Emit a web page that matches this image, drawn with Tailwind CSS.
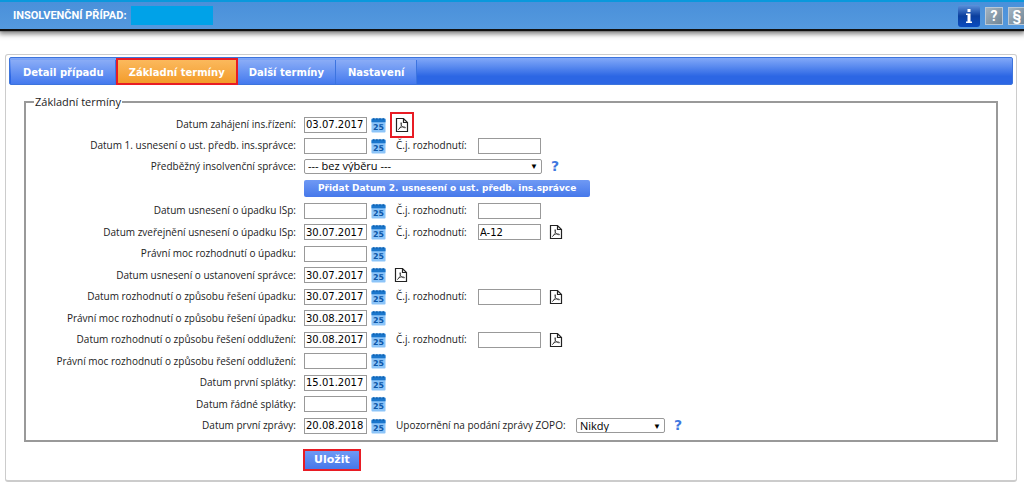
<!DOCTYPE html>
<html lang="cs">
<head>
<meta charset="utf-8">
<title>Insolvenční případ</title>
<script src="https://cdn.jsdelivr.net/npm/@tailwindcss/browser@4"></script>
</head>
<body class="bg-white font-['Open_Sans',sans-serif] text-[10px] text-[#222] overflow-x-hidden">
<svg class="hidden" aria-hidden="true">
  <symbol id="calendar" viewBox="0 0 16 16">
    <rect x="0.5" y="1" width="15" height="15" rx="1" fill="#8cc4f8"/>
    <path d="M0.5 5V2.500Q.5 1 2 1H14Q15.500 1 15.500 2.500V5Z" fill="#1a76cc"/>
    <path d="M3 0.500v2M6.300 0.500v2M9.600 0.500v2M13 0.500v2" stroke="#0b559f" stroke-width="1"/>
    <text x="8" y="13.500" text-anchor="middle" font-family="DejaVu Sans" font-weight="bold" font-size="8.500" fill="#0d57a8">25</text>
  </symbol>
  <symbol id="pdf" viewBox="0 0 14 16">
    <path d="M1.500 1.500H8.500L12.500 5.500V14.500H1.500ZM8.500 1.500V5.500H12.500" fill="#fff" stroke="#222" stroke-width="1.200"/>
    <path d="M3.500 12.500C5.500 11 7 8 6.500 6C6 5 5.500 6 6 7.500C6.700 9.500 8.500 11 10.500 10.800C11 10.200 9 9.600 7 10C5.500 10.300 4 11.200 3.500 12.500Z" fill="none" stroke="#333" stroke-width="0.800"/>
  </symbol>
</svg>

<header class="flex h-[29px] items-center border-t-2 border-[#0a98dc] bg-linear-to-b from-[#4a90da] to-[#5499de] pl-[13px] shadow-[0_2px_1px_#111,0_4px_5px_1px_#00000080]">
  <h1 class="pt-px font-[Roboto,sans-serif] text-[11px] font-bold text-white">INSOLVENČNÍ PŘÍPAD:</h1>
  <span class="ml-[5px] h-[19px] w-[82px] bg-[#00a2e8]"></span>
  <nav class="-mr-[2px] ml-auto flex items-center gap-[5px]">
    <button aria-label="Informace" class="flex size-[22px] items-center justify-center rounded-[3px] bg-linear-to-b from-[#5c92dc] via-[#0a3f9e] to-[#0a4cc0]"><svg viewBox="0 0 22 22" class="size-[22px]" fill="#fff"><path d="M9.500 4h3v3h-3zM8 8.500h4.500v8H14V18H8v-1.500h1.500V10H8z"/></svg></button>
    <button class="h-[18px] w-[18px] border border-[#b9c8d6] bg-linear-to-br from-[#a3b3c0] to-[#6f8596] font-[Roboto,sans-serif] text-[14px] leading-4 font-bold text-white">?</button>
    <button class="h-[18px] w-[18px] border border-[#b9c8d6] bg-linear-to-br from-[#a3b3c0] to-[#6f8596] font-[Roboto,sans-serif] text-[14px] leading-4 font-bold text-white">§</button>
  </nav>
</header>

<main class="mr-[7px] ml-[5px] mt-[25px] rounded-[3px] border border-b-2 border-[#ccc] px-[3px] pt-[2px] pb-[9px]">
  <nav class="flex h-[28px] rounded-[2px] border border-[#3d74dc] bg-linear-to-b from-[#82a8f8] to-[#2c66e4] to-70% pl-px font-['DejaVu_Sans',sans-serif] text-[10px] font-bold text-white">
    <a href="#" class="mt-[2px] flex items-center border-r border-[#3c74e0] bg-linear-to-b from-[#8aacf6] to-[#4479ee] pr-[11px] pl-[12px]">Detail případu</a>
    <a href="#" class="-mb-px flex items-center border-2 border-[#e81c24] bg-linear-to-b from-[#fbb95c] to-[#f39c28] px-[11px] pt-px">Základní termíny</a>
    <a href="#" class="mt-[2px] flex items-center border-r border-[#3c74e0] bg-linear-to-b from-[#8aacf6] to-[#4479ee] px-[11px]">Další termíny</a>
    <a href="#" class="mt-[2px] flex items-center border-r border-[#3c74e0] bg-linear-to-b from-[#8aacf6] to-[#4479ee] px-[12px]">Nastavení</a>
  </nav>
  <form>
    <fieldset class="mx-[15px] mt-[11px] border-2 border-[#999] px-2 pb-1">
      <legend class="px-px text-[11px] leading-3">Základní termíny</legend>
      <div id="rows" class="pt-[6px]"></div>
    </fieldset>
    <button type="button" class="mt-[7px] ml-[294px] h-[22px] border-2 border-[#e81c24] bg-linear-to-b from-[#6f99f4] to-[#4678ea] px-[9px] font-['DejaVu_Sans',sans-serif] text-[11px] font-bold text-white">Uložit</button>
  </form>
</main>

<script>
const cal = '<button type="button" aria-label="Kalendář" class="ml-1 h-4 w-[15px]"><svg class="h-4 w-[15px]"><use href="#calendar"/></svg></button>';
const pdf = '<a href="#" aria-label="PDF"><svg class="h-4 w-[14px]"><use href="#pdf"/></svg></a>';
const help = '<a href="#" class="ml-[9px] font-[\'DejaVu_Sans\',sans-serif] text-[14px] font-bold text-[#3f78e0]">?</a>';
const inp = (id, v) => `<input id="${id}" value="${v}" class="h-4 w-[63px] shrink-0 border border-[#999] bg-white px-px font-['DejaVu_Sans',sans-serif] text-[10px] text-black">`;
const cj = (n, v = '') => `<label for="c${n}" class="ml-[10px] w-[82px]">Č.j. rozhodnutí:</label>${inp('c' + n, v)}`;
const after = '<span class="ml-2 flex">' + pdf + '</span>';
const sel = (id, t, w) => `<select id="${id}" class="h-[15px] ${w} appearance-none rounded-[2px] border border-[#999] bg-white pl-[3px] text-[11px] leading-3 text-black"><option>${t}</option></select><span class="pointer-events-none -ml-3 w-3 text-[8px] text-black">▼</span>`;
const rows = [
  ['Datum zahájení ins.řízení:', '03.07.2017', '<span class="ml-1 flex h-[26px] w-6 items-center justify-center border-2 border-[#e81c24]">' + pdf + '</span>', 'h-[21px]'],
  ['Datum 1. usnesení o ust. předb. ins.správce:', '', cj(1), 'h-[21px]'],
  ['Předběžný insolvenční správce:', null, sel('f2', '--- bez výběru ---', 'w-[238px]') + help, 'h-[20px]'],
  ['', null, '<button type="button" class="h-[17px] rounded-[2px] bg-linear-to-b from-[#6f99f4] to-[#4678ea] px-[14px] font-[\'DejaVu_Sans\',sans-serif] text-[9px] leading-4 font-bold text-white">Přidat Datum 2. usnesení o ust. předb. ins.správce</button>', 'h-[24px]'],
  ['Datum usnesení o úpadku ISp:', '', cj(4), 'h-[21px]'],
  ['Datum zveřejnění usnesení o úpadku ISp:', '30.07.2017', cj(5, 'A-12') + after, 'h-[22px]'],
  ['Právní moc rozhodnutí o úpadku:', '', '', 'h-[21px]'],
  ['Datum usnesení o ustanovení správce:', '30.07.2017', after, 'h-[22px]'],
  ['Datum rozhodnutí o způsobu řešení úpadku:', '30.07.2017', cj(8) + after, 'h-[21px]'],
  ['Právní moc rozhodnutí o způsobu řešení úpadku:', '30.08.2017', '', 'h-[22px]'],
  ['Datum rozhodnutí o způsobu řešení oddlužení:', '30.08.2017', cj(10) + after, 'h-[21px]'],
  ['Právní moc rozhodnutí o způsobu řešení oddlužení:', '', '', 'h-[22px]'],
  ['Datum první splátky:', '15.01.2017', '', 'h-[21px]'],
  ['Datum řádné splátky:', '', '', 'h-[22px]'],
  ['Datum první zprávy:', '20.08.2018', '<label for="zopo" class="ml-[10px] w-[180px] whitespace-nowrap">Upozornění na podání zprávy ZOPO:</label>' + sel('zopo', 'Nikdy', 'w-[89px]') + help, 'h-[21px]'],
];
document.getElementById('rows').innerHTML = rows.map(([l, v, x, h], i) =>
  `<div class="flex items-center ${h}"><label for="f${i}" class="mr-2 w-[262px] shrink-0 text-right whitespace-nowrap">${l}</label>${v === null ? '' : inp('f' + i, v) + cal}${x}</div>`).join('');
</script>
</body>
</html>
